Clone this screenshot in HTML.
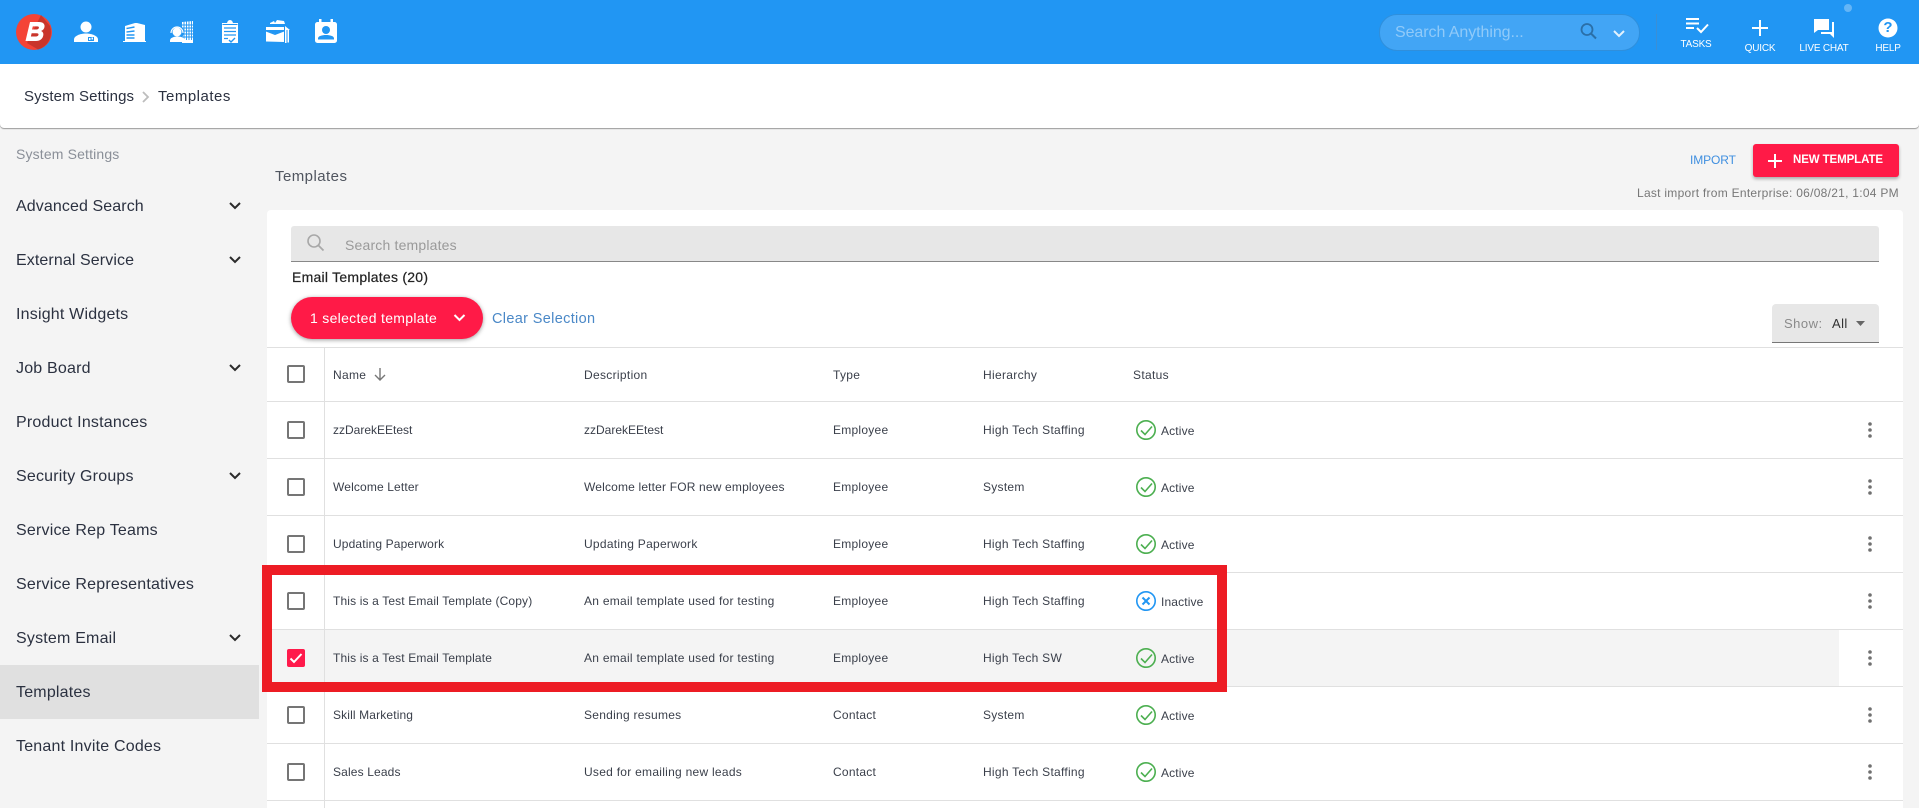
<!DOCTYPE html>
<html><head><meta charset="utf-8"><title>Templates</title>
<style>
html,body{margin:0;padding:0;width:1919px;height:808px;overflow:hidden;background:#f4f4f4;font-family:"Liberation Sans",Arial,sans-serif}
.a{position:absolute}
.t{position:absolute;line-height:0;white-space:nowrap}
.nav{font-size:16px;left:16px;color:#2b3140;letter-spacing:.2px}
.c{font-size:12px;color:#3a3f4a;letter-spacing:.14px}
.d{font-size:12px;color:#3a3f4a;letter-spacing:.27px}
.e{font-size:12px;color:#3a3f4a;letter-spacing:.25px}
.h{font-size:12px;color:#3a3f4a;letter-spacing:.32px}
.cb{position:absolute;left:287px;width:14px;height:14px;border:2px solid #757575;border-radius:2px}
.top{font-size:10px;color:#fff;letter-spacing:-.2px;transform:translateX(-50%)}
.ln{position:absolute;left:267px;width:1636px;height:1px;background:#e0e0e0}
svg{position:absolute;overflow:visible}
</style></head><body>
<div class="a" style="left:0;top:0;width:1919px;height:64px;background:#2196f3"></div>
<div class="a" style="left:0;top:64px;width:1919px;height:64px;background:#fff;border-radius:0 0 4px 4px;box-shadow:0 1px 1px #999"></div>

<!-- logo -->
<svg style="left:0;top:0" width="360" height="64" viewBox="0 0 360 64">
<circle cx="34" cy="32" r="18" fill="#f44336"/>
<path d="M41 15 L50 26 A18 18 0 0 1 38 49.5 L27 43 Z" fill="#c9352b"/>
<path fill="#fff" fill-rule="evenodd" d="M30 22h9c4 0 6 2 5.500 5 -.4 2-1.600 3.300-3.500 4 1.800.7 2.700 2.200 2.300 4.300C42.700 39 40 41 36 41H25.500ZM32 29.500h4.500c1.300 0 2.200-.6 2.400-1.600.2-1-.4-1.500-1.700-1.500H32.800ZM30.900 36.500h5c1.500 0 2.400-.6 2.600-1.700.2-1-.5-1.600-1.900-1.600h-5Z"/>
<!-- user -->
<circle cx="86" cy="27" r="5.500" fill="#fff"/>
<path fill="#fff" d="M74 42v-2.500c0-3.500 6-6 12-6s12 2.500 12 6V42Z"/>
<rect x="88" y="37" width="6" height="4" fill="#2196f3"/><rect x="89" y="38" width="1.500" height="2" fill="#fff"/><rect x="91.500" y="37.500" width="1.500" height="2" fill="#fff"/>
<!-- building -->
<path fill="#fff" d="M123 41h23v1h-23ZM125 26l10-3 2 0 8 2v16h-20Z"/>
<path stroke="#2196f3" stroke-width="1.400" d="M126.500 28.500l8-1.500M126.500 32l8-1M126.500 35h8M126.500 38h8"/>
<!-- agent + building -->
<path fill="#fff" d="M182 22l11-1v22h-11Z"/>
<path stroke="#2196f3" stroke-width=".9" d="M184 21v19M186.500 21v19M189 21v19M191.500 21v19M182 25h11M182 28h11M182 31h11M182 34h11M182 37h11" fill="none"/>
<circle cx="177" cy="32" r="7" fill="#2196f3"/>
<circle cx="177" cy="32" r="4.500" fill="#fff"/>
<path d="M171 33a6 6 0 0 1 12 0" fill="none" stroke="#fff" stroke-width="1.200"/>
<path fill="#fff" d="M170 42v-1.500c0-2.500 3.500-4 7.500-4s7.500 1.500 7.500 4V42Z"/>
<!-- clipboard -->
<path fill="#fff" d="M222 23h5c.5-2 1.500-3 3-3s2.500 1 3 3h5v20h-16Z"/>
<path stroke="#2196f3" stroke-width="1.300" fill="none" d="M224 28h12M224 31.500h12M224 35h12M224 38.500h4"/>
<path stroke="#2196f3" stroke-width="1.400" fill="none" d="M229 40l2 2 4-4"/>
<path stroke="#2196f3" stroke-width="1" fill="none" d="M222.500 24.500h15"/>
<!-- briefcase -->
<path fill="#fff" d="M270 23l4-2 1 2 2-3 7 1 1 3h-15ZM285 26l5 4h-5Z"/>
<path fill="#fff" d="M266 27h18v3h-18ZM266 31l9 3h1l8-3v11l-18-.500ZM285 30h1.500v13H285ZM287.500 30h1.500v12.500h-1.500Z"/>
<path stroke="#2196f3" stroke-width="1" fill="none" d="M266 31l9 3.500 9-3.500"/>
<!-- contact -->
<rect x="315" y="22" width="22" height="21" rx="2.500" fill="#fff"/>
<rect x="319" y="19" width="2.500" height="5" fill="#fff"/><rect x="330.500" y="19" width="2.500" height="5" fill="#fff"/>
<circle cx="326" cy="30" r="4" fill="#2196f3"/>
<path fill="#2196f3" d="M318 39.500v-1c0-2.500 4-3.500 8-3.500s8 1 8 3.500v1Z"/>
</svg>

<!-- search -->
<div class="a" style="left:1379px;top:14px;width:259px;height:35px;background:#42a5f5;border-radius:18px;border:1px solid #2f8fdc;box-sizing:content-box"></div>
<div class="t" style="left:1395px;top:33px;font-size:16px;color:#90caf9;letter-spacing:-.07px">Search Anything...</div>
<svg style="left:1578px;top:20px" width="60" height="24"><circle cx="9" cy="9.500" r="5.500" fill="none" stroke="#2a6fa8" stroke-width="1.800"/><path d="M13 13.500l5 5" stroke="#2a6fa8" stroke-width="2"/><path d="M36 11l5 5 5-5" fill="none" stroke="#e3f2fd" stroke-width="2"/></svg>
<div class="a" style="left:1656px;top:14px;width:1px;height:36px;background:#3a8fd6"></div>
<svg style="left:1680px;top:0" width="239" height="40">
<path d="M6 19h13M6 23.500h13M6 28h8" stroke="#fff" stroke-width="2" fill="none"/><path d="M17 28l4 4 7-7.500" stroke="#fff" stroke-width="2" fill="none"/>
<path d="M80 20v16M72 28h16" stroke="#fff" stroke-width="2"/>
<path fill="#fff" d="M134 19h15v11h-11l-4 3ZM141 32h11V22h2v16l-4-4h-9Z"/>
<circle cx="168" cy="8" r="4" fill="#64b5f6"/>
<circle cx="208" cy="28" r="9.500" fill="#fff"/>
</svg>
<div class="t" style="left:1880px;top:28px;font-size:15px;font-weight:bold;color:#2196f3;width:16px;text-align:center">?</div>
<div class="t top" style="left:1696px;top:45px">TASKS</div>
<div class="t top" style="left:1760px;top:49px">QUICK</div>
<div class="t top" style="left:1824px;top:49px">LIVE CHAT</div>
<div class="t top" style="left:1888px;top:49px">HELP</div>

<!-- breadcrumb -->
<div class="t" style="left:24px;top:97px;font-size:15px;color:#2b3140;letter-spacing:.12px">System Settings</div>
<svg style="left:141px;top:90px" width="10" height="14"><path d="M2 2l5 5-5 5" fill="none" stroke="#bdbdbd" stroke-width="1.800"/></svg>
<div class="t" style="left:158px;top:97px;font-size:15px;color:#2b3140;letter-spacing:.5px">Templates</div>

<!-- sidebar -->
<div class="t" style="left:16px;top:154px;font-size:14px;color:#8a8f98;letter-spacing:.15px">System Settings</div>
<div class="a" style="left:0;top:665px;width:259px;height:54px;background:#e0e0e0"></div>
<div class="t nav" style="top:207px;letter-spacing:.1px">Advanced Search</div>
<div class="t nav" style="top:261px;letter-spacing:.1px">External Service</div>
<div class="t nav" style="top:315px">Insight Widgets</div>
<div class="t nav" style="top:369px">Job Board</div>
<div class="t nav" style="top:423px">Product Instances</div>
<div class="t nav" style="top:477px">Security Groups</div>
<div class="t nav" style="top:531px">Service Rep Teams</div>
<div class="t nav" style="top:585px">Service Representatives</div>
<div class="t nav" style="top:639px">System Email</div>
<div class="t nav" style="top:693px">Templates</div>
<div class="t nav" style="top:747px">Tenant Invite Codes</div>
<svg style="left:0;top:0" width="260" height="808"><g fill="none" stroke="#2b2b2b" stroke-width="2"><path d="M230 203l5 5 5-5M230 257l5 5 5-5M230 365l5 5 5-5M230 473l5 5 5-5M230 635l5 5 5-5"/></g></svg>

<!-- title + actions -->
<div class="t" style="left:275px;top:177px;font-size:15px;color:#50555f;letter-spacing:.45px">Templates</div>
<div class="t" style="left:1690px;top:160px;font-size:12px;color:#3f8fe0;letter-spacing:-.1px">IMPORT</div>
<div class="a" style="left:1753px;top:144px;width:146px;height:33px;background:#ff1a47;border-radius:3px;box-shadow:0 2px 3px rgba(0,0,0,.3)"></div>
<svg style="left:1768px;top:154px" width="16" height="14"><path d="M7 0v14M0 7h14" stroke="#fff" stroke-width="2"/></svg>
<div class="t" style="left:1793px;top:160px;font-size:11.5px;font-weight:bold;color:#fff;letter-spacing:-.1px">NEW TEMPLATE</div>
<div class="t" style="left:1637px;top:193px;font-size:12px;color:#777;letter-spacing:.27px">Last import from Enterprise: 06/08/21, 1:04 PM</div>

<!-- card -->
<div class="a" style="left:267px;top:210px;width:1636px;height:598px;background:#fff;border-radius:4px 4px 0 0"></div>
<div class="a" style="left:291px;top:226px;width:1588px;height:35px;background:#e7e7e7;border-bottom:1px solid #888;border-radius:3px 3px 0 0"></div>
<svg style="left:305px;top:232px" width="20" height="22"><circle cx="9" cy="9" r="6" fill="none" stroke="#a8a8a8" stroke-width="1.600"/><path d="M13.500 13.500l5 5" stroke="#a8a8a8" stroke-width="1.800"/></svg>
<div class="t" style="left:345px;top:245px;font-size:14px;color:#9a9a9a;letter-spacing:.18px">Search templates</div>
<div class="t" style="left:292px;top:277px;font-size:14px;color:#222;letter-spacing:.25px;-webkit-text-stroke:.2px #222">Email Templates (20)</div>
<div class="a" style="left:291px;top:297px;width:192px;height:42px;background:#ff1a47;border-radius:21px;box-shadow:0 1px 4px rgba(0,0,0,.4)"></div>
<div class="t" style="left:310px;top:318px;font-size:14px;color:#fff;letter-spacing:.3px">1 selected template</div>
<svg style="left:453px;top:313px" width="14" height="10"><path d="M1.500 2l5 5 5-5" fill="none" stroke="#fff" stroke-width="2"/></svg>
<div class="t" style="left:492px;top:319px;font-size:14.500px;color:#4a88c7;letter-spacing:.34px">Clear Selection</div>

<div class="a" style="left:1772px;top:304px;width:107px;height:38px;background:#e7e7e7;border-bottom:1px solid #777;border-radius:4px 4px 0 0"></div>
<div class="t" style="left:1784px;top:324px;font-size:13px;color:#8a8a8a;letter-spacing:.5px">Show:</div>
<div class="t" style="left:1832px;top:324px;font-size:13px;color:#333;letter-spacing:.4px">All</div>
<svg style="left:1855px;top:321px" width="12" height="7"><path d="M1 0h9l-4.500 5Z" fill="#666"/></svg>

<!-- table -->
<div class="a" style="left:267px;top:629px;width:1572px;height:57px;background:#f4f4f4"></div>
<div class="ln" style="top:347px"></div><div class="ln" style="top:401px"></div><div class="ln" style="top:458px"></div><div class="ln" style="top:515px"></div><div class="ln" style="top:572px"></div><div class="ln" style="top:629px"></div><div class="ln" style="top:686px"></div><div class="ln" style="top:743px"></div><div class="ln" style="top:800px"></div>
<div class="a" style="left:324px;top:347px;width:1px;height:461px;background:#e0e0e0"></div>

<div class="cb" style="top:365px"></div>
<div class="t h" style="left:333px;top:375px">Name</div>
<svg style="left:373px;top:367px" width="14" height="15"><path d="M7 1v12M2 8l5 5 5-5" fill="none" stroke="#777" stroke-width="1.400"/></svg>
<div class="t h" style="left:584px;top:375px">Description</div>
<div class="t h" style="left:833px;top:375px">Type</div>
<div class="t h" style="left:983px;top:375px">Hierarchy</div>
<div class="t h" style="left:1133px;top:375px">Status</div>

<!-- rows -->
<div class="cb" style="top:421px"></div>
<div class="t c" style="left:333px;top:430px;letter-spacing:0">zzDarekEEtest</div><div class="t c" style="left:584px;top:430px;letter-spacing:0">zzDarekEEtest</div><div class="t e" style="left:833px;top:430px">Employee</div><div class="t d" style="left:983px;top:430px">High Tech Staffing</div><div class="t c" style="left:1161px;top:431px">Active</div>

<div class="cb" style="top:478px"></div>
<div class="t c" style="left:333px;top:487px">Welcome Letter</div><div class="t c" style="left:584px;top:487px;letter-spacing:.17px">Welcome letter FOR new employees</div><div class="t e" style="left:833px;top:487px">Employee</div><div class="t d" style="left:983px;top:487px">System</div><div class="t c" style="left:1161px;top:488px">Active</div>

<div class="cb" style="top:535px"></div>
<div class="t c" style="left:333px;top:544px">Updating Paperwork</div><div class="t d" style="left:584px;top:544px">Updating Paperwork</div><div class="t e" style="left:833px;top:544px">Employee</div><div class="t d" style="left:983px;top:544px">High Tech Staffing</div><div class="t c" style="left:1161px;top:545px">Active</div>

<div class="cb" style="top:592px"></div>
<div class="t c" style="left:333px;top:601px">This is a Test Email Template (Copy)</div><div class="t d" style="left:584px;top:601px">An email template used for testing</div><div class="t e" style="left:833px;top:601px">Employee</div><div class="t d" style="left:983px;top:601px">High Tech Staffing</div><div class="t c" style="left:1161px;top:602px">Inactive</div>

<div class="a" style="left:287px;top:649px;width:18px;height:18px;background:#ff1a4b;border-radius:2px"></div>
<svg style="left:287px;top:649px" width="18" height="18"><path d="M3.500 9.500l3.500 3.500 7.500-8" fill="none" stroke="#fff" stroke-width="2"/></svg>
<div class="t c" style="left:333px;top:658px">This is a Test Email Template</div><div class="t d" style="left:584px;top:658px">An email template used for testing</div><div class="t e" style="left:833px;top:658px">Employee</div><div class="t d" style="left:983px;top:658px">High Tech SW</div><div class="t c" style="left:1161px;top:659px">Active</div>

<div class="cb" style="top:706px"></div>
<div class="t c" style="left:333px;top:715px">Skill Marketing</div><div class="t d" style="left:584px;top:715px">Sending resumes</div><div class="t e" style="left:833px;top:715px">Contact</div><div class="t d" style="left:983px;top:715px">System</div><div class="t c" style="left:1161px;top:716px">Active</div>

<div class="cb" style="top:763px"></div>
<div class="t c" style="left:333px;top:772px">Sales Leads</div><div class="t d" style="left:584px;top:772px">Used for emailing new leads</div><div class="t e" style="left:833px;top:772px">Contact</div><div class="t d" style="left:983px;top:772px">High Tech Staffing</div><div class="t c" style="left:1161px;top:773px">Active</div>

<svg style="left:0;top:0" width="1919" height="808">
<g fill="none" stroke="#4caf50" stroke-width="1.600">
<circle cx="1146" cy="430" r="9.200"/><path d="M1141 430.500l4 4 7-8"/>
<circle cx="1146" cy="487" r="9.200"/><path d="M1141 487.500l4 4 7-8"/>
<circle cx="1146" cy="544" r="9.200"/><path d="M1141 544.500l4 4 7-8"/>
<circle cx="1146" cy="658" r="9.200"/><path d="M1141 658.500l4 4 7-8"/>
<circle cx="1146" cy="715" r="9.200"/><path d="M1141 715.500l4 4 7-8"/>
<circle cx="1146" cy="772" r="9.200"/><path d="M1141 772.500l4 4 7-8"/>
</g>
<circle cx="1146" cy="601" r="9.200" fill="none" stroke="#2196f3" stroke-width="1.600"/>
<path d="M1142.500 597.500l7 7M1149.500 597.500l-7 7" stroke="#2196f3" stroke-width="2"/>
<g fill="#707070">
<circle cx="1870" cy="424" r="1.800"/><circle cx="1870" cy="430" r="1.800"/><circle cx="1870" cy="436" r="1.800"/>
<circle cx="1870" cy="481" r="1.800"/><circle cx="1870" cy="487" r="1.800"/><circle cx="1870" cy="493" r="1.800"/>
<circle cx="1870" cy="538" r="1.800"/><circle cx="1870" cy="544" r="1.800"/><circle cx="1870" cy="550" r="1.800"/>
<circle cx="1870" cy="595" r="1.800"/><circle cx="1870" cy="601" r="1.800"/><circle cx="1870" cy="607" r="1.800"/>
<circle cx="1870" cy="652" r="1.800"/><circle cx="1870" cy="658" r="1.800"/><circle cx="1870" cy="664" r="1.800"/>
<circle cx="1870" cy="709" r="1.800"/><circle cx="1870" cy="715" r="1.800"/><circle cx="1870" cy="721" r="1.800"/>
<circle cx="1870" cy="766" r="1.800"/><circle cx="1870" cy="772" r="1.800"/><circle cx="1870" cy="778" r="1.800"/>
</g>
</svg>

<!-- red annotation -->
<div class="a" style="left:262px;top:565px;width:945px;height:107px;border:10px solid #ed1c24"></div>
</body></html>
